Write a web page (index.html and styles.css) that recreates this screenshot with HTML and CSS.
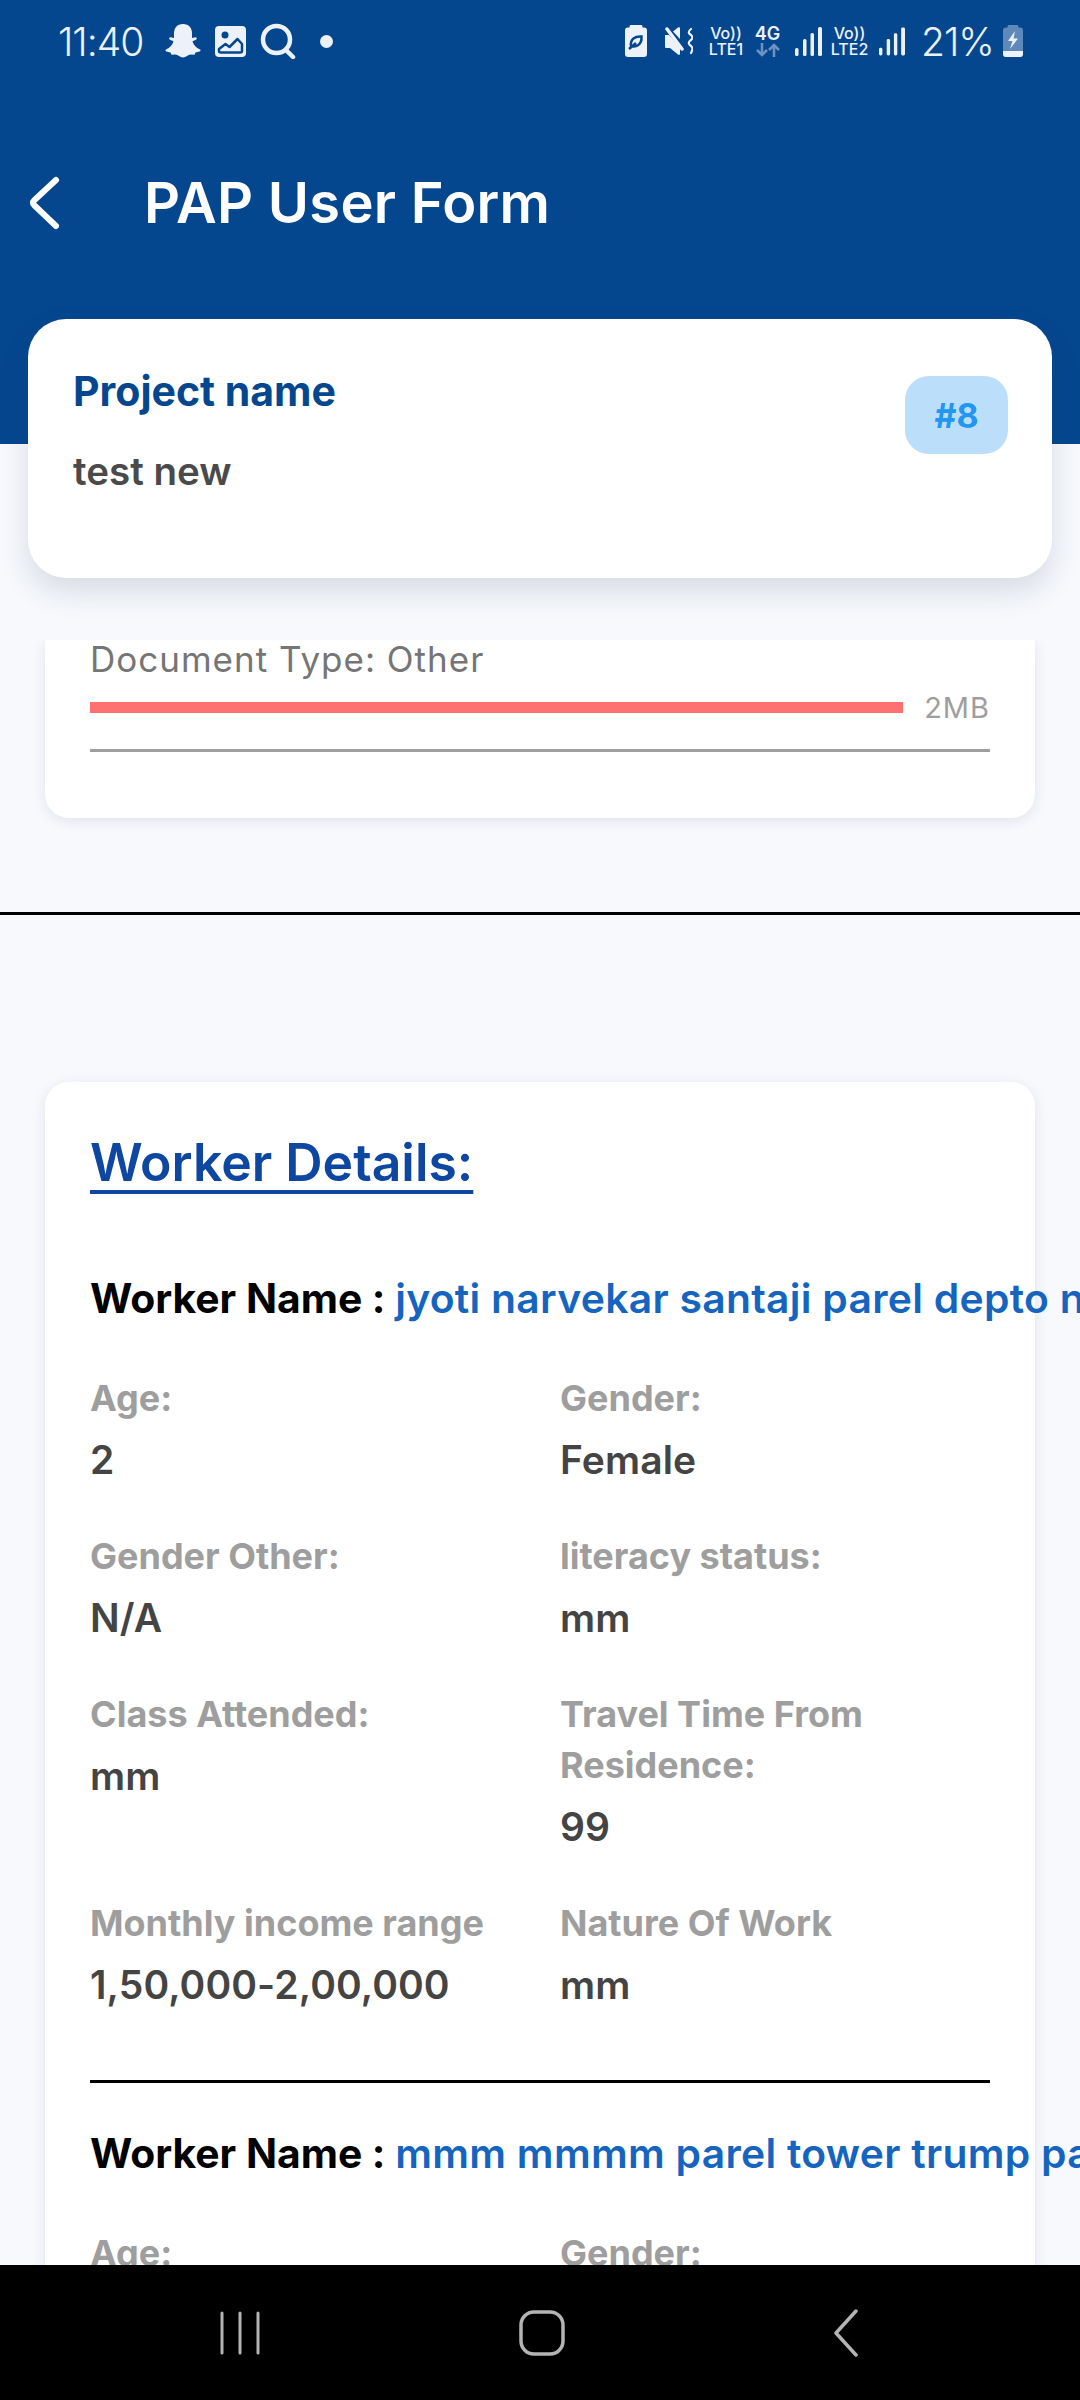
FILE: index.html
```html
<!DOCTYPE html>
<html>
	<head>
		<meta charset="utf-8" />
		<title>PAP User Form</title>
		<link rel="stylesheet" href="styles.css">
	</head>
	<body>
		<div class="screen">
			<div class="top-bar">
				<div class="status-bar">
					<div class="status-left">
						<span class="time">11:40</span>
						<svg class="snap" width="36" height="35" viewBox="0 0 36 35"><path fill="#edf2f8" d="M18 0c6 0 9 4 9 9.500V14l3.500-.8c1.500 0 1.800 1.800.5 2.500l-3.500 1.500c.8 3.500 3.500 6.500 7.500 8.300 1 .6.500 1.700-.5 2l-4 1-1 2.300-3.800-.2c-2.700.4-4.700 2.900-7.700 2.900s-5-2.500-7.700-2.900l-3.800.2-1-2.300-4-1c-1-.3-1.500-1.400-.5-2 4-1.800 6.700-4.800 7.500-8.300L5 15.700c-1.300-.7-1-2.500.5-2.500L9 14V9.500C9 4 12 0 18 0z"/></svg>
						<svg class="pic" width="31" height="31" viewBox="0 0 31 31"><rect width="31" height="31" rx="4" fill="#edf2f8"/><circle cx="10" cy="9" r="3.500" fill="#05478f"/><path d="M4 23l6.500-5 4 3 8-8 4.500 5v7c0 1-1 1.500-2 1.500H6c-1 0-2-.5-2-1.500z" fill="none" stroke="#05478f" stroke-width="2.500" stroke-linejoin="round"/></svg>
						<svg class="search" width="36" height="36" viewBox="0 0 36 36"><circle cx="16.500" cy="16.500" r="13.500" fill="none" stroke="#edf2f8" stroke-width="4.500"/><path d="M26 27l7 7" stroke="#edf2f8" stroke-width="4.500" stroke-linecap="round"/></svg>
						<span class="dot"></span>
					</div>
					<div class="status-right">
						<svg width="22" height="32" viewBox="0 0 22 32"><path fill="#edf2f8" d="M6 0h10c1 0 1.500.5 1.500 2.500H19c2 0 3 1 3 3V29c0 2-1 3-3 3H3c-2 0-3-1-3-3V5.500c0-2 1-3 3-3h1.500C4.500.5 5 0 6 0z"/><path fill="none" stroke="#05478f" stroke-width="2.500" d="M6 21c5 1.500 11-1 10.500-9.500C10 11 5 14 6 21zM4 24l7-6"/></svg>
						<svg class="mute" width="28" height="28" viewBox="0 0 28 28"><path fill="#edf2f8" d="M0 8h4l11 12v7c0 1-1 1-2 .5L5 21H1c-1 0-1-1-1-1zM8 4.500L13 .5c1-.5 2-.5 2 .5v11z"/><path stroke="#edf2f8" stroke-width="3.500" stroke-linecap="round" d="M2 2l15 20"/><path fill="none" stroke="#edf2f8" stroke-width="2.200" stroke-linecap="round" d="M26 2c-3 2.500-3 4 0 6 2 2 2 3 0 5-3 2-3 4 0 6 2 2 2 3 0 7"/></svg>
						<div class="net-label lte1"><span>Vo))</span><span>LTE1</span></div>
						<div class="net-four"><span>4G</span><svg width="24" height="14" viewBox="0 0 24 14"><path fill="none" stroke="#6f93c1" stroke-width="2.500" d="M6 0v12M1 7l5 5 5-5M18 14V2M13 7l5-5 5 5"/></svg></div>
						<svg class="sig sig1" width="27" height="29" viewBox="0 0 27 29"><rect x="0" y="21" width="3.500" height="8" rx="1.500"/><rect x="8" y="12" width="3.500" height="17" rx="1.500"/><rect x="15.500" y="6" width="3.500" height="23" rx="1.500"/><rect x="23" y="0" width="4" height="29" rx="1.500"/></svg>
						<div class="net-label lte2"><span>Vo))</span><span>LTE2</span></div>
						<svg class="sig sig2" width="26" height="29" viewBox="0 0 27 29"><rect x="0" y="21" width="3.500" height="8" rx="1.500"/><rect x="8" y="12" width="3.500" height="17" rx="1.500"/><rect x="15.500" y="6" width="3.500" height="23" rx="1.500"/><rect x="23" y="0" width="4" height="29" rx="1.500"/></svg>
						<span class="percent">21%</span>
						<svg class="batt" width="20" height="32" viewBox="0 0 20 32"><path fill="#5f88bb" d="M6 0h8c1 0 1.500.5 1.500 2.500H17c2 0 3 1 3 3V29c0 2-1 3-3 3H3c-2 0-3-1-3-3V5.500c0-2 1-3 3-3h1.500C4.500.5 5 0 6 0z"/><path fill="#edf2f8" d="M0 26h20v3c0 2-1 3-3 3H3c-2 0-3-1-3-3z"/><path fill="#edf2f8" d="M12 6L5 16h4.500L7 24l8-10.500h-4.500z"/></svg>
					</div>
				</div>
				<div class="app-bar">
					<svg class="back" width="32" height="56" viewBox="0 0 32 56"><path fill="none" stroke="#fff" stroke-width="6" stroke-linecap="round" stroke-linejoin="round" d="M27 5L5 25.500c-1.500 1.500-1.500 3 0 4.500L27 51"/></svg>
					<h1>PAP User Form</h1>
				</div>
			</div>
			<div class="project-card">
				<div>
					<div class="project-label">Project name</div>
					<div class="project-value">test new</div>
				</div>
				<div class="badge">#8</div>
			</div>
			<div class="scroll">
				<div class="card doc-card">
					<div class="doc-type">Document Type: Other</div>
					<div class="progress-row">
						<div class="progress"></div>
						<span class="size">2MB</span>
					</div>
					<div class="doc-line"></div>
				</div>
				<div class="divider"></div>
				<div class="card worker-card">
					<h2>Worker Details:</h2>
					<div class="worker-name">Worker Name : <span>jyoti narvekar santaji parel depto naka mumbai</span></div>
					<div class="grid">
						<div class="field"><div class="label">Age:</div><div class="value">2</div></div>
						<div class="field"><div class="label">Gender:</div><div class="value">Female</div></div>
						<div class="field"><div class="label">Gender Other:</div><div class="value">N/A</div></div>
						<div class="field"><div class="label">literacy status:</div><div class="value">mm</div></div>
						<div class="field"><div class="label">Class Attended:</div><div class="value">mm</div></div>
						<div class="field"><div class="label">Travel Time From Residence:</div><div class="value">99</div></div>
						<div class="field"><div class="label">Monthly income range</div><div class="value">1,50,000-2,00,000</div></div>
						<div class="field"><div class="label">Nature Of Work</div><div class="value">mm</div></div>
					</div>
					<div class="worker-line"></div>
					<div class="worker-name">Worker Name : <span>mmm mmmm parel tower trump park mumbai</span></div>
					<div class="grid">
						<div class="field"><div class="label">Age:</div><div class="value">2</div></div>
						<div class="field"><div class="label">Gender:</div><div class="value">Female</div></div>
					</div>
				</div>
			</div>
			<div class="nav-bar">
				<svg class="nav-recent" width="42" height="44" viewBox="0 0 42 44"><path stroke="#b4b4b4" stroke-width="3" stroke-linecap="round" d="M3 2v40M21 2v40M39 2v40"/></svg>
				<svg class="nav-home" width="46" height="46" viewBox="0 0 46 46"><rect x="2" y="2" width="42" height="42" rx="13" fill="none" stroke="#b4b4b4" stroke-width="3.500"/></svg>
				<svg class="nav-back" width="26" height="48" viewBox="0 0 26 48"><path fill="none" stroke="#b4b4b4" stroke-width="3.500" stroke-linecap="round" stroke-linejoin="round" d="M23 2L3 24l20 22"/></svg>
			</div>
		</div>
	</body>
</html>
```

FILE: styles.css
```css
* {
	box-sizing: border-box;
}
html, body {
	margin: 0;
	padding: 0;
}
body {
	width: 1080px;
	height: 2400px;
	overflow: hidden;
	font-family: Inter, "Noto Sans", sans-serif;
	background-color: #f7f9fd;
}
.screen {
	position: relative;
	display: flex;
	flex-direction: column;
	height: 2400px;
}
.top-bar {
	height: 444px;
	flex: none;
	background-color: #05478f;
}
.status-bar {
	display: flex;
	justify-content: space-between;
	align-items: center;
	height: 82px;
	padding: 0 57px 0 58px;
	color: #edf2f8;
}
.status-left, .status-right {
	display: flex;
	align-items: center;
}
.time {
	width: 90px;
	font-size: 39px;
	font-weight: 300;
	letter-spacing: -1px;
}
.snap {
	margin-left: 17px;
}
.pic {
	margin-left: 14px;
}
.search {
	margin-left: 14px;
}
.dot {
	width: 13px;
	height: 13px;
	margin-left: 24px;
	border-radius: 50%;
	background-color: #edf2f8;
}
.mute {
	margin-left: 18px;
}
.net-label {
	display: flex;
	flex-direction: column;
	align-items: center;
	font-size: 16px;
	font-weight: 500;
	line-height: 16px;
}
.lte1 {
	width: 38px;
	margin-left: 14px;
}
.lte2 {
	width: 39px;
	margin-left: 8px;
}
.net-four {
	display: flex;
	flex-direction: column;
	align-items: center;
	width: 25px;
	margin-left: 10px;
	font-size: 18px;
	font-weight: 600;
	line-height: 18px;
}
.sig {
	fill: #edf2f8;
}
.sig1 {
	margin-left: 15px;
}
.sig2 {
	margin-left: 10px;
}
.percent {
	width: 72px;
	margin-left: 16px;
	font-size: 39px;
	font-weight: 300;
	letter-spacing: -1px;
}
.batt {
	margin-left: 10px;
}
.app-bar {
	display: flex;
	align-items: center;
	height: 120px;
	margin-top: 61px;
	padding-left: 29px;
}
.back {
	flex: none;
}
h1 {
	margin: 0 0 0 83px;
	font-size: 56px;
	font-weight: 600;
	letter-spacing: .3px;
	color: #fff;
}
.project-card {
	position: absolute;
	top: 319px;
	left: 28px;
	z-index: 5;
	display: flex;
	justify-content: space-between;
	width: 1024px;
	height: 259px;
	padding: 48px 45px 0 45px;
	border-radius: 38px;
	background-color: #fff;
	box-shadow: 0 14px 30px rgba(30, 40, 70, .14);
}
.project-label {
	font-size: 41px;
	font-weight: 700;
	line-height: 48px;
	color: #05478f;
}
.project-value {
	margin-top: 32px;
	font-size: 38.5px;
	font-weight: 600;
	line-height: 48px;
	color: #4a4a4a;
}
.badge {
	display: flex;
	justify-content: center;
	align-items: center;
	width: 103px;
	height: 78px;
	margin-top: 9px;
	margin-right: -1px;
	font-size: 34px;
	font-weight: 700;
	color: #2196f3;
	border-radius: 24px;
	background-color: #bbdefb;
}
.scroll {
	flex: 1;
	min-height: 0;
	margin-top: 196px;
	overflow: hidden;
}
.card {
	margin: 0 45px;
	padding: 0 45px;
	border-radius: 24px;
	background-color: #fff;
	box-shadow: 0 3px 14px rgba(30, 40, 70, .1);
}
.doc-card {
	height: 178px;
	border-radius: 0 0 24px 24px;
}
.doc-type {
	font-size: 35px;
	line-height: 38px;
	letter-spacing: 1px;
	color: #757575;
}
.progress-row {
	display: flex;
	align-items: center;
	height: 40px;
	margin-top: 9px;
}
.progress {
	flex: 1;
	height: 11px;
	background-color: #ff7070;
}
.size {
	margin-left: 21px;
	font-size: 29px;
	letter-spacing: 1px;
	color: #9e9e9e;
}
.doc-line {
	height: 3px;
	margin-top: 22px;
	background-color: #9e9e9e;
}
.divider {
	height: 3px;
	margin-top: 94px;
	background-color: #000;
}
.worker-card {
	margin-top: 167px;
	padding-top: 50px;
	height: 1300px;
}
h2 {
	margin: 0;
	font-size: 51.7px;
	font-weight: 600;
	line-height: 60px;
	color: #0d47a1;
	text-decoration: underline;
	text-decoration-thickness: 4px;
	text-underline-offset: 9px;
}
.worker-name {
	margin-top: 82px;
	font-size: 40.8px;
	font-weight: 700;
	line-height: 48px;
	white-space: nowrap;
	color: #000;
}
.worker-name span {
	font-weight: 600;
	letter-spacing: .3px;
	color: #1565c0;
}
.grid {
	display: grid;
	grid-template-columns: 470px 1fr;
	row-gap: 47px;
	margin-top: 51px;
}
.label {
	font-size: 36px;
	font-weight: 700;
	line-height: 51px;
	color: #9e9e9e;
}
.value {
	margin-top: 12px;
	font-size: 39px;
	font-weight: 600;
	line-height: 48px;
	letter-spacing: .1px;
	color: #444;
}
.worker-line {
	height: 3px;
	margin-top: 71px;
	background-color: #000;
}
.worker-line + .worker-name {
	margin-top: 46px;
}
.nav-bar {
	display: flex;
	align-items: center;
	flex: none;
	height: 135px;
	background-color: #000;
}
.nav-recent {
	margin-left: 219px;
}
.nav-home {
	margin-left: 258px;
}
.nav-back {
	margin-left: 268px;
}
```
